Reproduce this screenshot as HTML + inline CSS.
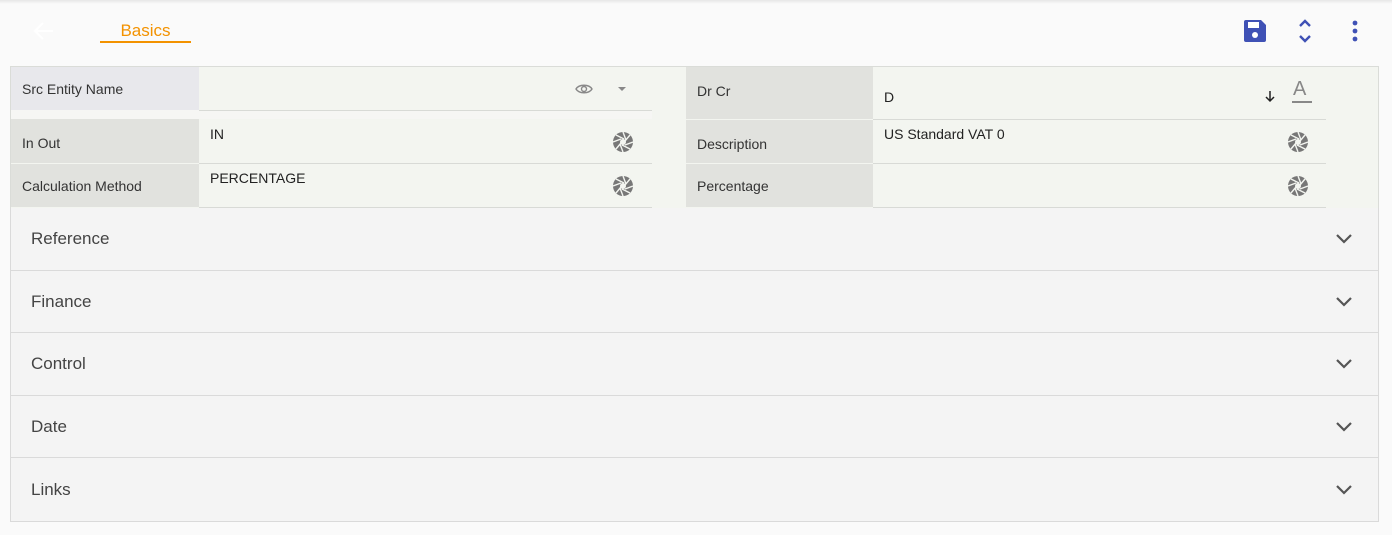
<!DOCTYPE html>
<html><head><style>
*{box-sizing:border-box;margin:0;padding:0}
body{width:1392px;height:535px;background:#fafafa;font-family:"Liberation Sans",sans-serif;position:relative;overflow:hidden}
.topsh{position:absolute;left:0;top:0;width:1392px;height:4px;background:linear-gradient(#e6e6e6,#fafafa)}
.abs{position:absolute}
.lbl{position:absolute;background:#e1e2de;color:#333;font-size:14px;padding-left:11px;display:flex;align-items:center}
.val{position:absolute;background:#f3f5f0;color:#222;font-size:14px;padding-left:11px;padding-top:7px;border-bottom:1px solid #d8dad6}
.acc{position:absolute;left:10px;width:1369px;background:#f4f4f4;border-bottom:1px solid #dadada;border-left:1px solid #dadada;border-right:1px solid #dadada;font-size:17px;color:#444;padding-left:20px;display:flex;align-items:center}
.chev{position:absolute;right:26px;top:50%;margin-top:-5px}
</style></head><body>
<div class="topsh"></div>
<svg class="abs" style="left:33px;top:21px" width="22" height="20" viewBox="0 0 22 20"><path d="M20 10H3M10 2L2 10l8 8" stroke="#fff" stroke-width="2.2" fill="none"/></svg>
<div class="abs" style="left:100px;top:21px;width:91px;text-align:center;color:#f39200;font-size:17px">Basics</div>
<div class="abs" style="left:100px;top:41px;width:91px;height:2px;background:#f39200"></div>
<svg class="abs" style="left:1243px;top:19px" width="24" height="24" viewBox="0 0 24 24"><path d="M1 3a2 2 0 0 1 2-2h15l5 5v15a2 2 0 0 1-2 2H3a2 2 0 0 1-2-2z" fill="#3f51b5"/><rect x="5" y="3" width="11" height="6" fill="#fff"/><circle cx="12" cy="16" r="3" fill="#fff"/></svg>
<svg class="abs" style="left:1297px;top:19px" width="16" height="24" viewBox="0 0 16 24"><path d="M3 7l5-5 5 5M3 17l5 5 5-5" stroke="#3f51b5" stroke-width="2.4" fill="none"/></svg>
<svg class="abs" style="left:1350px;top:20px" width="10" height="22" viewBox="0 0 10 22"><circle cx="5" cy="3" r="2.4" fill="#3f51b5"/><circle cx="5" cy="11" r="2.4" fill="#3f51b5"/><circle cx="5" cy="19" r="2.4" fill="#3f51b5"/></svg>

<div class="abs" style="left:10px;top:66px;width:1369px;height:142px;background:#f3f5f0;border:1px solid #dadcd8;border-bottom:none"></div>
<div class="abs" style="left:11px;top:110px;width:641px;height:9px;background:#f6f6f4"></div>
<div class="lbl" style="left:11px;top:67px;width:188px;height:43px;background:#e8e8ec">Src Entity Name</div>
<div class="val" style="left:199px;top:67px;width:453px;height:44px"></div>
<svg class="abs" style="left:575px;top:83px" width="18" height="12" viewBox="0 0 18 12"><path d="M1 6C4 1 14 1 17 6C14 11 4 11 1 6z" stroke="#888" stroke-width="1.4" fill="none"/><circle cx="9" cy="6" r="2.5" stroke="#888" stroke-width="1.4" fill="none"/></svg>
<svg class="abs" style="left:618px;top:87px" width="8" height="5"><path d="M0 0h8L4 4z" fill="#888"/></svg>
<div class="lbl" style="left:11px;top:119px;width:188px;height:44px;padding-top:4px">In Out</div>
<div class="val" style="left:199px;top:119px;width:453px;height:45px">IN</div>
<div class="lbl" style="left:11px;top:164px;width:188px;height:43px">Calculation Method</div>
<div class="val" style="left:199px;top:164px;width:453px;height:44px;padding-top:6px">PERCENTAGE</div>

<div class="lbl" style="left:686px;top:67px;width:188px;height:52px;padding-bottom:4px">Dr Cr</div>
<div class="val" style="left:873px;top:67px;width:453px;height:53px;padding-top:22px">D</div>
<svg class="abs" style="left:1265px;top:91px" width="10" height="12" viewBox="0 0 10 12"><path d="M5 0v10M1 6l4 4 4-4" stroke="#222" stroke-width="1.5" fill="none"/></svg>
<div class="abs" style="left:1293px;top:78px;font-size:20px;color:#888">A</div>
<div class="abs" style="left:1292px;top:101px;width:20px;height:2px;background:#888"></div>
<div class="lbl" style="left:686px;top:120px;width:188px;height:43px;padding-top:4px">Description</div>
<div class="val" style="left:873px;top:120px;width:453px;height:44px;padding-top:6px">US Standard VAT 0</div>
<div class="lbl" style="left:686px;top:164px;width:188px;height:43px">Percentage</div>
<div class="val" style="left:873px;top:164px;width:453px;height:44px"></div>

<svg width="0" height="0" style="position:absolute"><defs><g id="ap"><circle cx="10" cy="10" r="10" fill="#777"/><path d="M10 0L13 8M20 10L12 13M10 20L7 12M0 10L8 7M17 3L12 9M17 17L9 13M3 17L8 11M3 3L11 7" stroke="#f3f5f0" stroke-width="1.4"/><circle cx="10" cy="10" r="3" fill="#f3f5f0"/></g></defs></svg>
<svg class="abs" style="left:613px;top:132px" width="20" height="20"><use href="#ap"/></svg>
<svg class="abs" style="left:613px;top:176px" width="20" height="20"><use href="#ap"/></svg>
<svg class="abs" style="left:1288px;top:132px" width="20" height="20"><use href="#ap"/></svg>
<svg class="abs" style="left:1288px;top:176px" width="20" height="20"><use href="#ap"/></svg>

<div class="acc" style="top:208px;height:63px">Reference<svg class="chev" width="16" height="10"><path d="M1 1l7 7 7-7" stroke="#555" stroke-width="2.2" fill="none"/></svg></div>
<div class="acc" style="top:271px;height:62px">Finance<svg class="chev" width="16" height="10"><path d="M1 1l7 7 7-7" stroke="#555" stroke-width="2.2" fill="none"/></svg></div>
<div class="acc" style="top:333px;height:63px">Control<svg class="chev" width="16" height="10"><path d="M1 1l7 7 7-7" stroke="#555" stroke-width="2.2" fill="none"/></svg></div>
<div class="acc" style="top:396px;height:62px">Date<svg class="chev" width="16" height="10"><path d="M1 1l7 7 7-7" stroke="#555" stroke-width="2.2" fill="none"/></svg></div>
<div class="acc" style="top:458px;height:64px">Links<svg class="chev" width="16" height="10"><path d="M1 1l7 7 7-7" stroke="#555" stroke-width="2.2" fill="none"/></svg></div>
</body></html>
